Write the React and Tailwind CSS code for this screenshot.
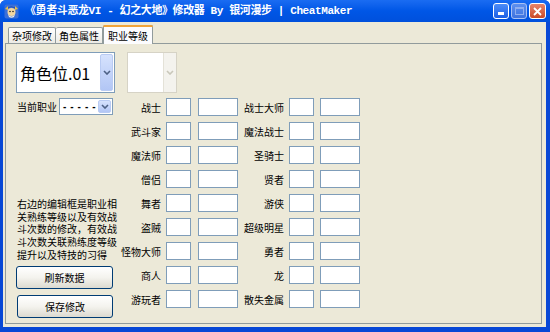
import React from "react";

const LEFT = ["战士", "武斗家", "魔法师", "僧侣", "舞者", "盗贼", "怪物大师", "商人", "游玩者"];
const RIGHT = ["战士大师", "魔法战士", "圣骑士", "贤者", "游侠", "超级明星", "勇者", "龙", "散失金属"];

const cjk = { fontFamily: '"Noto Sans CJK SC", "Noto Sans", sans-serif' };

function Chevron({ color = "#4d6185" }) {
  return (
    <svg width="8" height="5" viewBox="0 0 8 5">
      <path d="M1 1 L4 4 L7 1" fill="none" stroke={color} strokeWidth="1.6" />
    </svg>
  );
}

function DropButton({ disabled }) {
  return (
    <div
      className={
        disabled
          ? "w-[13px] h-full flex items-center justify-center bg-[#f4f3ee] border-l border-[#e4e2d8]"
          : "w-[13px] h-full flex items-center justify-center rounded-[2px] bg-gradient-to-b from-[#d6e2fd] to-[#b2c6f5] border border-[#b9cbf3]"
      }
    >
      <Chevron color={disabled ? "#c9c7ba" : "#4d6185"} />
    </div>
  );
}

function Box({ w }) {
  return <div className={`${w} h-[18px] bg-white border border-[#7f9db9]`} />;
}

function AppIcon() {
  return (
    <svg width="15" height="15" viewBox="0 0 15 15">
      <rect x="0.5" y="0.5" width="14" height="14" rx="2" fill="#3a6fd8" />
      <path d="M2 6 Q7 0 13 6 L12 4 Q7 1 3 4 Z" fill="#1d3f9a" />
      <circle cx="7.5" cy="8" r="4" fill="#f3d7a0" />
      <circle cx="6" cy="7.5" r="0.8" fill="#222" />
      <circle cx="9" cy="7.5" r="0.8" fill="#222" />
      <path d="M4 10 Q7.5 15 11 10 L10 13 Q7.5 14.5 5 13 Z" fill="#f1efe6" />
      <path d="M1 5 L4 2 L4 6 Z" fill="#e6c04a" />
      <path d="M14 5 L11 2 L11 6 Z" fill="#e6c04a" />
    </svg>
  );
}

const PARA = [
  "右边的编辑框是职业相",
  "关熟练等级以及有效战",
  "斗次数的修改，有效战",
  "斗次数关联熟练度等级",
  "提升以及特技的习得",
];

export default function App() {
  return (
    <div className="w-[550px] h-[332px] flex flex-col bg-[#0848d6] rounded-t-[6px] overflow-hidden" style={cjk}>
      {/* title bar */}
      <div className="h-[22px] flex items-center bg-gradient-to-b from-[#1a6cf2] via-[#0056e6] to-[#0050dc] pl-[4px] pr-[4px]">
        <AppIcon />
        <span
          className="ml-[6px] text-white font-bold text-[11px] whitespace-nowrap tracking-[-0.4px]"
          style={{ fontFamily: '"Liberation Mono", "Noto Sans CJK SC", monospace' }}
        >
          《勇者斗恶龙VI - 幻之大地》修改器 By 银河漫步 | CheatMaker
        </span>
        <div className="ml-auto flex gap-[2px] items-center">
          <div className="w-[16px] h-[16px] rounded-[3px] border border-white bg-gradient-to-b from-[#4c8cf8] to-[#1b5fe6] flex items-end pl-[4px] pb-[3px]">
            <div className="w-[6px] h-[3px] bg-white" />
          </div>
          <div className="w-[16px] h-[16px] rounded-[3px] border border-[#a9c1f3] bg-gradient-to-b from-[#5d90ef] to-[#3e73df] flex items-center justify-center">
            <div className="w-[9px] h-[8px] border border-[#8eaef0] border-t-2" />
          </div>
          <div className="w-[17px] h-[16px] rounded-[3px] border border-white bg-gradient-to-b from-[#e8846a] to-[#c94a26] flex items-center justify-center">
            <svg width="9" height="9" viewBox="0 0 9 9">
              <path d="M1 1 L8 8 M8 1 L1 8" stroke="white" strokeWidth="1.8" />
            </svg>
          </div>
        </div>
      </div>

      {/* client area */}
      <div className="flex-1 flex pl-[3px] pr-[4px] pb-[5px]">
        <div className="flex-1 bg-[#ece9d8] flex flex-col pt-[3px] pl-[2px] pr-[4px] pb-[3px] text-[10px] text-black">
          {/* tabs */}
          <div className="flex items-end h-[18px] pl-[3px] relative z-10">
            <div className="h-[16px] w-[48px] flex items-center justify-center border border-b-0 border-[#919b9c] rounded-t-[2px] bg-gradient-to-b from-white to-[#ecebe5]">
              杂项修改
            </div>
            <div className="h-[16px] w-[47px] flex items-center justify-center border border-b-0 border-l-0 border-[#919b9c] rounded-t-[2px] bg-gradient-to-b from-white to-[#ecebe5]">
              角色属性
            </div>
            <div className="h-[19px] w-[50px] -mb-px flex flex-col border border-b-0 border-[#919b9c] rounded-t-[2px] bg-[#fcfcfe]">
              <div className="h-[2px] bg-[#f0a43a] -mx-px -mt-px rounded-t-[2px]" />
              <div className="flex-1 flex items-center justify-center">职业等级</div>
            </div>
          </div>

          {/* panel */}
          <div className="flex-1 border border-[#919b9c] bg-[#ece9d8] pl-[10px] pt-[8px] flex flex-col">
            {/* top row */}
            <div className="flex gap-[12px]">
              <div className="w-[99px] h-[41px] bg-white border border-[#7f9db9] flex items-stretch p-[1px]">
                <div className="flex-1 flex items-center pl-[2px] text-[16px] whitespace-nowrap overflow-hidden">角色位.01</div>
                <DropButton />
              </div>
              <div className="w-[50px] h-[41px] bg-white border border-[#d6d3c6] flex items-stretch">
                <div className="flex-1" />
                <DropButton disabled />
              </div>
            </div>

            {/* bottom row */}
            <div className="flex mt-[5px]">
              <div className="w-[99px] flex flex-col">
                <div className="flex items-center h-[17px]">
                  <span className="ml-[1px] whitespace-nowrap">当前职业</span>
                  <div className="ml-auto mr-[2px] w-[54px] h-[17px] bg-white border border-[#7f9db9] flex items-stretch p-[1px]">
                    <div
                      className="flex-1 flex items-center pl-[2px] font-bold text-[10px] tracking-[0.6px] whitespace-nowrap overflow-hidden"
                      style={{ fontFamily: '"Liberation Sans", sans-serif' }}
                    >
                      - - - - -
                    </div>
                    <DropButton />
                  </div>
                </div>
                <div className="mt-[83px] ml-[1px] flex flex-col">
                  {PARA.map((line) => (
                    <div key={line} className="h-[12.6px] flex items-center whitespace-nowrap leading-none">
                      {line}
                    </div>
                  ))}
                </div>
                <button className="mt-[5px] w-[97px] h-[23px] rounded-[3px] border border-[#003c74] bg-gradient-to-b from-white via-[#f4f3ee] to-[#dcdad0] text-[10px]">
                  刷新数据
                </button>
                <button className="mt-[6px] ml-[1px] w-[96px] h-[23px] rounded-[3px] border border-[#003c74] bg-gradient-to-b from-white via-[#f4f3ee] to-[#dcdad0] text-[10px]">
                  保存修改
                </button>
              </div>

              <div className="flex flex-col gap-[6px]">
                {LEFT.map((l, i) => (
                  <div key={l} className="flex items-center h-[18px]">
                    <span className="w-[46px] text-right whitespace-nowrap">{l}</span>
                    <div className="ml-[5px]"><Box w="w-[25px]" /></div>
                    <div className="ml-[7px]"><Box w="w-[40px]" /></div>
                    <span className="w-[46px] text-right whitespace-nowrap">{RIGHT[i]}</span>
                    <div className="ml-[5px]"><Box w="w-[25px]" /></div>
                    <div className="ml-[6px]"><Box w="w-[40px]" /></div>
                  </div>
                ))}
              </div>
            </div>
          </div>
        </div>
      </div>
    </div>
  );
}
